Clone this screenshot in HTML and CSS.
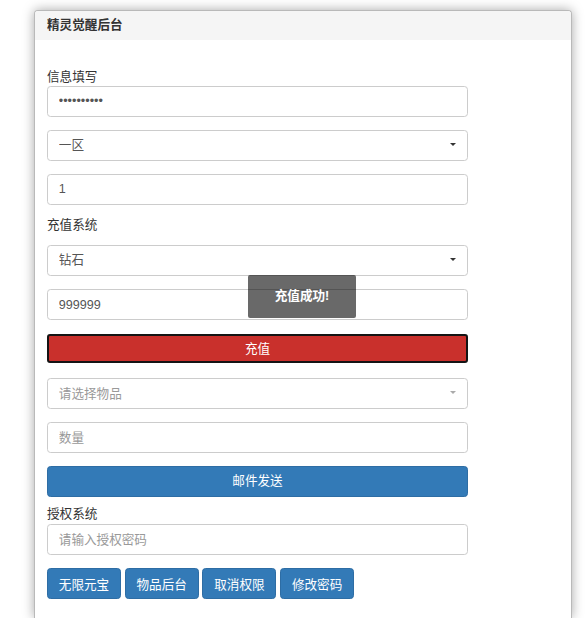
FILE: index.html
```html
<!DOCTYPE html>
<html lang="zh-CN">
<head>
<meta charset="utf-8">
<title>精灵觉醒后台</title>
<link rel="stylesheet" href="styles.css">
</head>
<body>
<div class="page">
  <div class="panel">
    <div class="panel-head">精灵觉醒后台</div>
    <div class="panel-body">
      <div class="form">
        <label class="label l1">信息填写</label>
        <input class="control mb135" type="password" value="1234567890">
        <div class="select-wrap mb135">
          <select class="control"><option>一区</option></select>
        </div>
        <input class="control l-after" type="text" value="1">

        <label class="label l2">充值系统</label>
        <div class="select-wrap mb137">
          <select class="control"><option>钻石</option></select>
        </div>
        <input class="control mb145" type="text" value="999999">
        <button class="btn btn-red btn-wide mb15" type="button">充值</button>
        <div class="select-wrap placeholder mb134">
          <select class="control"><option>请选择物品</option></select>
        </div>
        <input class="control mb131" type="text" placeholder="数量">
        <button class="btn btn-blue btn-wide mb65" type="button">邮件发送</button>

        <label class="label l3">授权系统</label>
        <input class="control mb131" type="text" placeholder="请输入授权密码">
        <div class="btn-row">
          <button class="btn btn-blue btn-sm" type="button">无限元宝</button>
          <button class="btn btn-blue btn-sm" type="button">物品后台</button>
          <button class="btn btn-blue btn-sm" type="button">取消权限</button>
          <button class="btn btn-blue btn-sm" type="button">修改密码</button>
        </div>
      </div>
    </div>
    <div class="toast">充值成功!</div>
  </div>
</div>
</body>
</html>
```

FILE: styles.css
```css
html, body {
  margin: 0;
  padding: 0;
  overflow: hidden;
  background: #fff;
}

body {
  font-family: "Liberation Sans", "Noto Sans CJK SC", sans-serif;
  font-size: 12.6px;
  color: #333;
}

.page {
  padding: 10px 0 0 34px;
}

.panel {
  position: relative;
  width: 538px;
  height: 608px;
  box-sizing: border-box;
  background: #fff;
  border: 1px solid #b9b9b9;
  border-bottom: none;
  border-radius: 4px 4px 0 0;
  box-shadow: 0 0 12px rgba(0, 0, 0, 0.35);
}

.panel-head {
  height: 29px;
  line-height: 29px;
  padding-left: 12px;
  background: #f5f5f5;
  font-weight: bold;
  font-size: 12.6px;
  color: #333;
  border-radius: 3px 3px 0 0;
}

.panel-body {
  padding: 26px 12px 0 12px;
}

.form {
  width: 421px;
  display: flex;
  flex-direction: column;
}

.label {
  display: block;
  height: 16px;
  padding-top: 2px;
  line-height: 18px;
  color: #333;
}

.control {
  display: block;
  width: 100%;
  height: 30.6px;
  box-sizing: border-box;
  margin: 0;
  padding: 0 10.8px;
  border: 1px solid #ccc;
  border-radius: 3.6px;
  background: #fff;
  font-family: "Liberation Sans", "Noto Sans CJK SC", sans-serif;
  font-size: 12.6px;
  color: #555;
  outline: none;
  -webkit-appearance: none;
  appearance: none;
}

.control::placeholder {
  color: #999;
}

.select-wrap {
  position: relative;
}

.select-wrap::after {
  content: "";
  position: absolute;
  right: 12px;
  top: 13px;
  border-left: 3px solid transparent;
  border-right: 3px solid transparent;
  border-top: 3.5px solid #333;
  pointer-events: none;
}

.select-wrap.placeholder::after {
  border-top-color: #aaa;
}

.select-wrap.placeholder .control {
  color: #999;
}

.btn {
  display: block;
  width: 100%;
  height: 31px;
  box-sizing: border-box;
  margin: 0;
  padding: 0;
  border: 1px solid #2e6da4;
  border-radius: 3.6px;
  font-family: "Liberation Sans", "Noto Sans CJK SC", sans-serif;
  font-size: 12.6px;
  color: #fff;
  text-align: center;
  cursor: pointer;
}

.btn-wide {
  padding-bottom: 3px;
}

.btn-blue {
  background: #337ab7;
  border-color: #2e6da4;
}

.btn-red {
  height: 29px;
  background: #c9302c;
  border: 2px solid #141414;
  border-radius: 3px;
}

.btn-row {
  display: flex;
  gap: 3.7px;
}

.btn-sm {
  width: 74px;
  flex: 0 0 74px;
}

.toast {
  position: absolute;
  left: 213px;
  top: 264px;
  width: 108px;
  height: 43px;
  display: flex;
  align-items: center;
  justify-content: center;
  background: rgba(0, 0, 0, 0.59);
  border-radius: 2px;
  color: #fff;
  font-weight: bold;
  font-size: 12.6px;
  padding-bottom: 4px;
  box-sizing: border-box;
}

/* spacing utilities (kept last so they win over component margins) */
.l1 { margin-bottom: 2px; }
.l2 { margin-bottom: 13px; }
.l3 { margin-bottom: 2.8px; }
.mb135 { margin-bottom: 13.5px; }
.mb137 { margin-bottom: 13.7px; }
.mb145 { margin-bottom: 14.6px; }
.mb15 { margin-bottom: 14.8px; }
.mb134 { margin-bottom: 13.4px; }
.mb131 { margin-bottom: 13.1px; }
.mb65 { margin-bottom: 6.5px; }
.l-after { margin-bottom: 9.2px; }
```
